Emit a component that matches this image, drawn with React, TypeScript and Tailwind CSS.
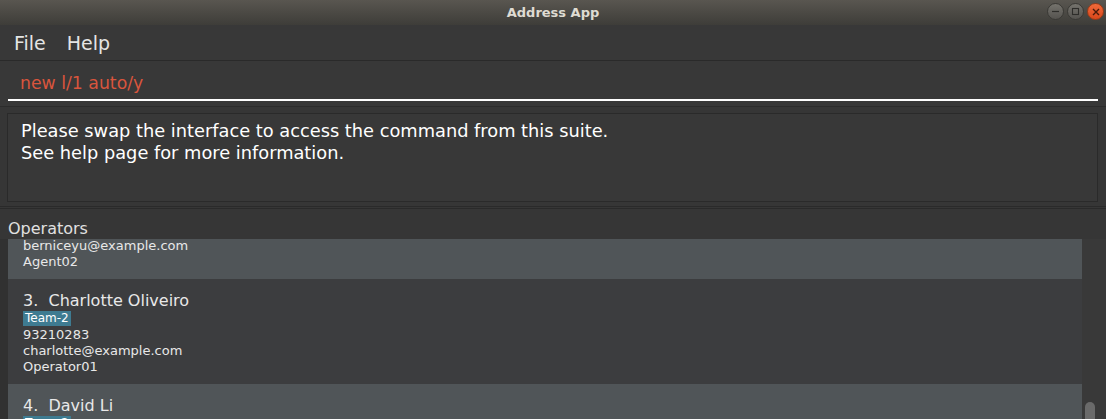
import React, { useLayoutEffect, useRef } from "react";

type Person = {
  name: string;
  tag: string;
  phone: string;
  email: string;
  role: string;
};

const people: Person[] = [
  { name: "Alex Yeoh", tag: "Team-1", phone: "87438807", email: "alexyeoh@example.com", role: "Agent01" },
  { name: "Bernice Yu", tag: "Team-1", phone: "99272758", email: "berniceyu@example.com", role: "Agent02" },
  { name: "Charlotte Oliveiro", tag: "Team-2", phone: "93210283", email: "charlotte@example.com", role: "Operator01" },
  { name: "David Li", tag: "Team-2", phone: "91031282", email: "lidavid@example.com", role: "Operator02" },
];

function WindowButton({ kind }: { kind: "min" | "max" | "close" }) {
  if (kind === "close") {
    return (
      <div className="w-[17px] h-[17px] rounded-full bg-gradient-to-b from-[#f26a3a] to-[#d9471a] border border-[#9c3a17] flex items-center justify-center">
        <svg width="8" height="8" viewBox="0 0 8 8">
          <path d="M1 1L7 7M7 1L1 7" stroke="#4a1a0a" strokeWidth="1.4" />
        </svg>
      </div>
    );
  }
  return (
    <div className="w-[17px] h-[17px] rounded-full bg-gradient-to-b from-[#75736d] to-[#55534f] border border-[#3a3935] flex items-center justify-center">
      {kind === "min" ? (
        <svg width="9" height="9" viewBox="0 0 9 9">
          <path d="M1 4.5H8" stroke="#2e2d2a" strokeWidth="1.2" />
        </svg>
      ) : (
        <svg width="9" height="9" viewBox="0 0 9 9">
          <rect x="1.5" y="1.5" width="6" height="6" fill="none" stroke="#2e2d2a" strokeWidth="1.1" />
        </svg>
      )}
    </div>
  );
}

function PersonCard({ person, index }: { person: Person; index: number }) {
  const light = index % 2 === 1;
  return (
    <div className={`${light ? "bg-[#505558]" : "bg-[#3c3d3f]"} pl-[15px] pt-[11px] pb-[9px] text-[#e8e8e8]`}>
      <div className="text-[16px] leading-[21px]">
        {index + 1}.&nbsp; {person.name}
      </div>
      <div className="h-[16px] flex items-start">
        <span className="h-[15px] leading-[15px] px-[2px] text-[12px] text-white bg-[#3e7b91]">
          {person.tag}
        </span>
      </div>
      <div className="text-[13px] leading-[16px]">{person.phone}</div>
      <div className="text-[13px] leading-[16px]">{person.email}</div>
      <div className="text-[13px] leading-[16px]">{person.role}</div>
    </div>
  );
}

export default function App() {
  const listRef = useRef<HTMLDivElement>(null);

  // list is shown scrolled down a bit, as in the running app
  useLayoutEffect(() => {
    if (listRef.current) listRef.current.scrollTop = 170;
  }, []);

  return (
    <div className="w-[1106px] h-[419px] overflow-hidden bg-[#383838] flex flex-col font-['DejaVu_Sans',sans-serif]">
      {/* title bar */}
      <div className="relative h-[25px] shrink-0 flex items-center justify-center bg-gradient-to-b from-[#595650] to-[#3e3d39]">
        <span className="text-[13px] font-bold text-[#dfdbd2]">Address App</span>
        <div className="absolute right-[2px] top-[3px] flex gap-[3px]">
          <WindowButton kind="min" />
          <WindowButton kind="max" />
          <WindowButton kind="close" />
        </div>
      </div>

      {/* menu */}
      <div className="h-[36px] shrink-0 flex items-center gap-[21px] px-[14px] border-b border-[#2a2a2a] text-[19px] leading-[24px] text-[#e4e4e4]">
        <span>File</span>
        <span>Help</span>
      </div>

      {/* command box */}
      <div className="h-[46px] shrink-0 pt-[6px] px-[8px] border-b border-[#2c2c2c]">
        <div className="h-[34px] border-b-2 border-white flex items-center pl-[12px] text-[17.3px] leading-[22px] text-[#d9553d]">
          new l/1 auto/y
        </div>
      </div>

      {/* result display */}
      <div className="shrink-0 bg-[#363636] pt-[6px] pb-[4px] pl-[7px] pr-[8px]">
        <div className="h-[89px] border border-[#2a2a2a] bg-[#383838] pl-[13px] pt-[6px] text-[17.8px] leading-[22px] text-white">
          <div>Please swap the interface to access the command from this suite.</div>
          <div>See help page for more information.</div>
        </div>
      </div>
      <div className="h-[3px] shrink-0 border-y border-[#2a2a2a] bg-[#363636]" />

      {/* list panel */}
      <div className="flex-1 flex flex-col bg-[#363636] min-h-0">
        <div className="h-[30px] shrink-0 pl-[8px] pt-[10px] text-[16px] leading-[20px] text-[#e0e0e0]">Operators</div>
        <div className="flex-1 flex min-h-0">
          <div className="w-[8px] shrink-0 bg-[#313131]" />
          <div ref={listRef} className="w-[1074px] overflow-hidden">
            {people.map((p, i) => (
              <PersonCard key={p.name} person={p} index={i} />
            ))}
          </div>
          <div className="flex-1 bg-[#393939] flex flex-col justify-end pl-[3px] pr-[11px]">
            <div className="h-[17px] rounded-t-[5px] bg-[#6a6a6a]" />
          </div>
        </div>
      </div>
    </div>
  );
}
